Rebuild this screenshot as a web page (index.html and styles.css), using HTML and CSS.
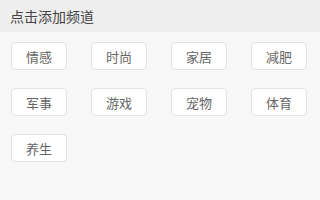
FILE: index.html
```html
<!DOCTYPE html>
<html lang="zh">
<head>
<meta charset="utf-8">
<link rel="stylesheet" href="styles.css">
</head>
<body>
<div class="header">点击添加频道</div>
<div class="grid">
  <div class="chip">情感</div>
  <div class="chip">时尚</div>
  <div class="chip">家居</div>
  <div class="chip">减肥</div>
  <div class="chip">军事</div>
  <div class="chip">游戏</div>
  <div class="chip">宠物</div>
  <div class="chip">体育</div>
  <div class="chip">养生</div>
</div>
</body>
</html>
```
FILE: styles.css
```css
html, body {
  margin: 0;
  padding: 0;
  background: #f8f8f8;
  font-family: "Noto Sans CJK SC", "Noto Sans", sans-serif;
}
body {
  width: 320px;
  height: 200px;
  overflow: hidden;
}
.header {
  height: 32px;
  line-height: 32px;
  background: #eeeeee;
  color: #444444;
  font-size: 14px;
  padding-left: 10px;
}
.grid {
  display: grid;
  grid-template-columns: repeat(4, 56px);
  column-gap: 24px;
  row-gap: 18px;
  padding: 10px 0 0 11px;
}
.chip {
  box-sizing: border-box;
  height: 28px;
  background: #ffffff;
  border: 1px solid #e2e2e2;
  border-radius: 4px;
  color: #666666;
  font-size: 13px;
  display: flex;
  align-items: center;
  justify-content: center;
}
```
